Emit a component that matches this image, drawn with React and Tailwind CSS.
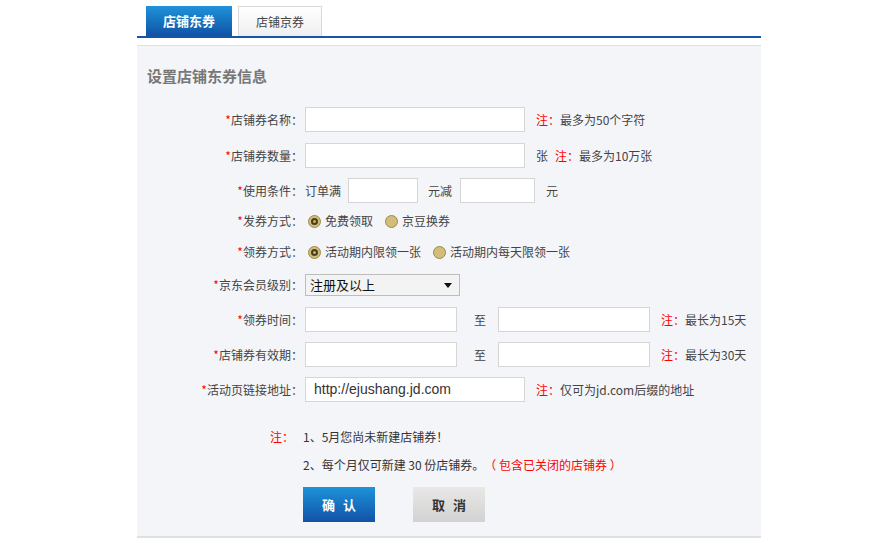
import React from 'react';

const FONT = { fontFamily: '"Noto Sans CJK SC", "Noto Sans", sans-serif' };

const Label = ({ children }) => (
  <div className="w-[168px] shrink-0 text-right text-[12px] text-[#444] pr-[2px]">
    <span className="text-[#ff0000]">*</span>
    {children}：
  </div>
);

const Input = ({ w, value }) => (
  <div className={`${w} h-[25px] bg-white border border-[#d6d6d6] flex items-center px-[8px] text-[14px] text-[#333]`}
    style={value ? { fontFamily: '"Liberation Sans", Arial, sans-serif' } : undefined}>
    {value}
  </div>
);

const Note = ({ children, className = '' }) => (
  <span className={`text-[12px] text-[#444] ${className}`}>
    <span className="text-[#ff0000]">注：</span>
    {children}
  </span>
);

const Radio = ({ checked }) => (
  <span className="w-[13px] h-[13px] rounded-full border border-[#9c8a48] bg-[#d2bd7a] flex items-center justify-center shrink-0">
    {checked && <span className="w-[7px] h-[7px] rounded-full border-[2px] border-[#4a3f1c] bg-[#c8b26c]" />}
  </span>
);

const App = () => {
  return (
    <div className="w-full h-[543px] bg-white" style={FONT}>
      <div className="ml-[137px] w-[624px]">
        {/* Tabs */}
        <div className="flex items-end gap-[6px] pl-[9px] pt-[6px]">
          <div className="w-[86px] h-[30px] flex items-center justify-center bg-linear-to-b from-[#1f93da] to-[#1252a6] text-white text-[13px] font-bold">
            店铺东券
          </div>
          <div className="w-[84px] h-[30px] flex items-center justify-center border border-b-0 border-[#d8d8d8] bg-linear-to-b from-white to-[#efefef] text-[#444] text-[12px]">
            店铺京券
          </div>
        </div>
        <div className="h-[2px] bg-[#1655a8]" />

        {/* Panel */}
        <div className="mt-[7px] border-t border-b-2 border-[#e0e0e0] bg-[#f4f5f9] pt-[20px] pb-[14px]">
          <div className="pl-[10px] h-[20px] flex items-center text-[15px] font-bold text-[#777]">
            设置店铺东券信息
          </div>

          <div className="mt-[21px] h-[25px] flex items-center">
            <Label>店铺券名称</Label>
            <Input w="w-[220px]" />
            <Note className="ml-[11px]">最多为50个字符</Note>
          </div>

          <div className="mt-[11px] h-[25px] flex items-center">
            <Label>店铺券数量</Label>
            <Input w="w-[220px]" />
            <span className="ml-[11px] text-[12px] text-[#444]">张</span>
            <Note className="ml-[7px]">最多为10万张</Note>
          </div>

          <div className="mt-[10px] h-[25px] flex items-center text-[12px] text-[#444]">
            <Label>使用条件</Label>
            <span>订单满</span>
            <div className="ml-[7px]"><Input w="w-[70px]" /></div>
            <span className="ml-[10px]">元减</span>
            <div className="ml-[8px]"><Input w="w-[75px]" /></div>
            <span className="ml-[11px]">元</span>
          </div>

          <div className="mt-[9px] h-[18px] flex items-center text-[12px] text-[#444]">
            <Label>发券方式</Label>
            <div className="ml-[3px] flex items-center gap-[4px]">
              <Radio checked />
              <span>免费领取</span>
            </div>
            <div className="ml-[12px] flex items-center gap-[4px]">
              <Radio />
              <span>京豆换券</span>
            </div>
          </div>

          <div className="mt-[13px] h-[18px] flex items-center text-[12px] text-[#444]">
            <Label>领券方式</Label>
            <div className="ml-[3px] flex items-center gap-[4px]">
              <Radio checked />
              <span>活动期内限领一张</span>
            </div>
            <div className="ml-[12px] flex items-center gap-[4px]">
              <Radio />
              <span>活动期内每天限领一张</span>
            </div>
          </div>

          <div className="mt-[13px] h-[22px] flex items-center text-[12px] text-[#444]">
            <Label>京东会员级别</Label>
            <div className="w-[155px] h-[22px] border border-[#bdbdbd] bg-[#f3f3f3] flex items-center justify-between pl-[4px] pr-[7px] text-[13px] text-[#111]">
              <span>注册及以上</span>
              <span className="w-0 h-0 border-l-[4px] border-r-[4px] border-t-[5px] border-l-transparent border-r-transparent border-t-[#111]" />
            </div>
          </div>

          <div className="mt-[11px] h-[25px] flex items-center text-[12px] text-[#444]">
            <Label>领券时间</Label>
            <Input w="w-[152px]" />
            <span className="ml-[17px] w-[24px]">至</span>
            <Input w="w-[152px]" />
            <Note className="ml-[11px]">最长为15天</Note>
          </div>

          <div className="mt-[10px] h-[25px] flex items-center text-[12px] text-[#444]">
            <Label>店铺券有效期</Label>
            <Input w="w-[152px]" />
            <span className="ml-[17px] w-[24px]">至</span>
            <Input w="w-[152px]" />
            <Note className="ml-[11px]">最长为30天</Note>
          </div>

          <div className="mt-[10px] h-[25px] flex items-center text-[12px] text-[#444]">
            <Label>活动页链接地址</Label>
            <Input w="w-[220px]" value="http://ejushang.jd.com" />
            <Note className="ml-[11px]">仅可为jd.com后缀的地址</Note>
          </div>

          <div className="mt-[27px] h-[16px] flex items-center text-[12px] text-[#333]">
            <span className="ml-[133px] w-[33px] text-[#ff0000]">注：</span>
            <span>1、5月您尚未新建店铺券！</span>
          </div>
          <div className="mt-[12px] h-[16px] flex items-center text-[12px] text-[#333]">
            <span className="ml-[166px]">2、每个月仅可新建 30 份店铺券。</span>
            <span className="text-[#ff0000]">（ 包含已关闭的店铺券 ）</span>
          </div>

          <div className="mt-[14px] flex items-center ml-[166px] gap-[38px]">
            <button className="w-[72px] h-[35px] bg-linear-to-b from-[#1f93da] to-[#1252a6] text-white text-[13px] font-bold tracking-[8px] pl-[8px]">
              确认
            </button>
            <button className="w-[72px] h-[35px] bg-linear-to-b from-[#e9e8e6] to-[#d2d2d2] text-[#333] text-[13px] font-bold tracking-[8px] pl-[8px]">
              取消
            </button>
          </div>
        </div>
      </div>
    </div>
  );
};

export default App;
